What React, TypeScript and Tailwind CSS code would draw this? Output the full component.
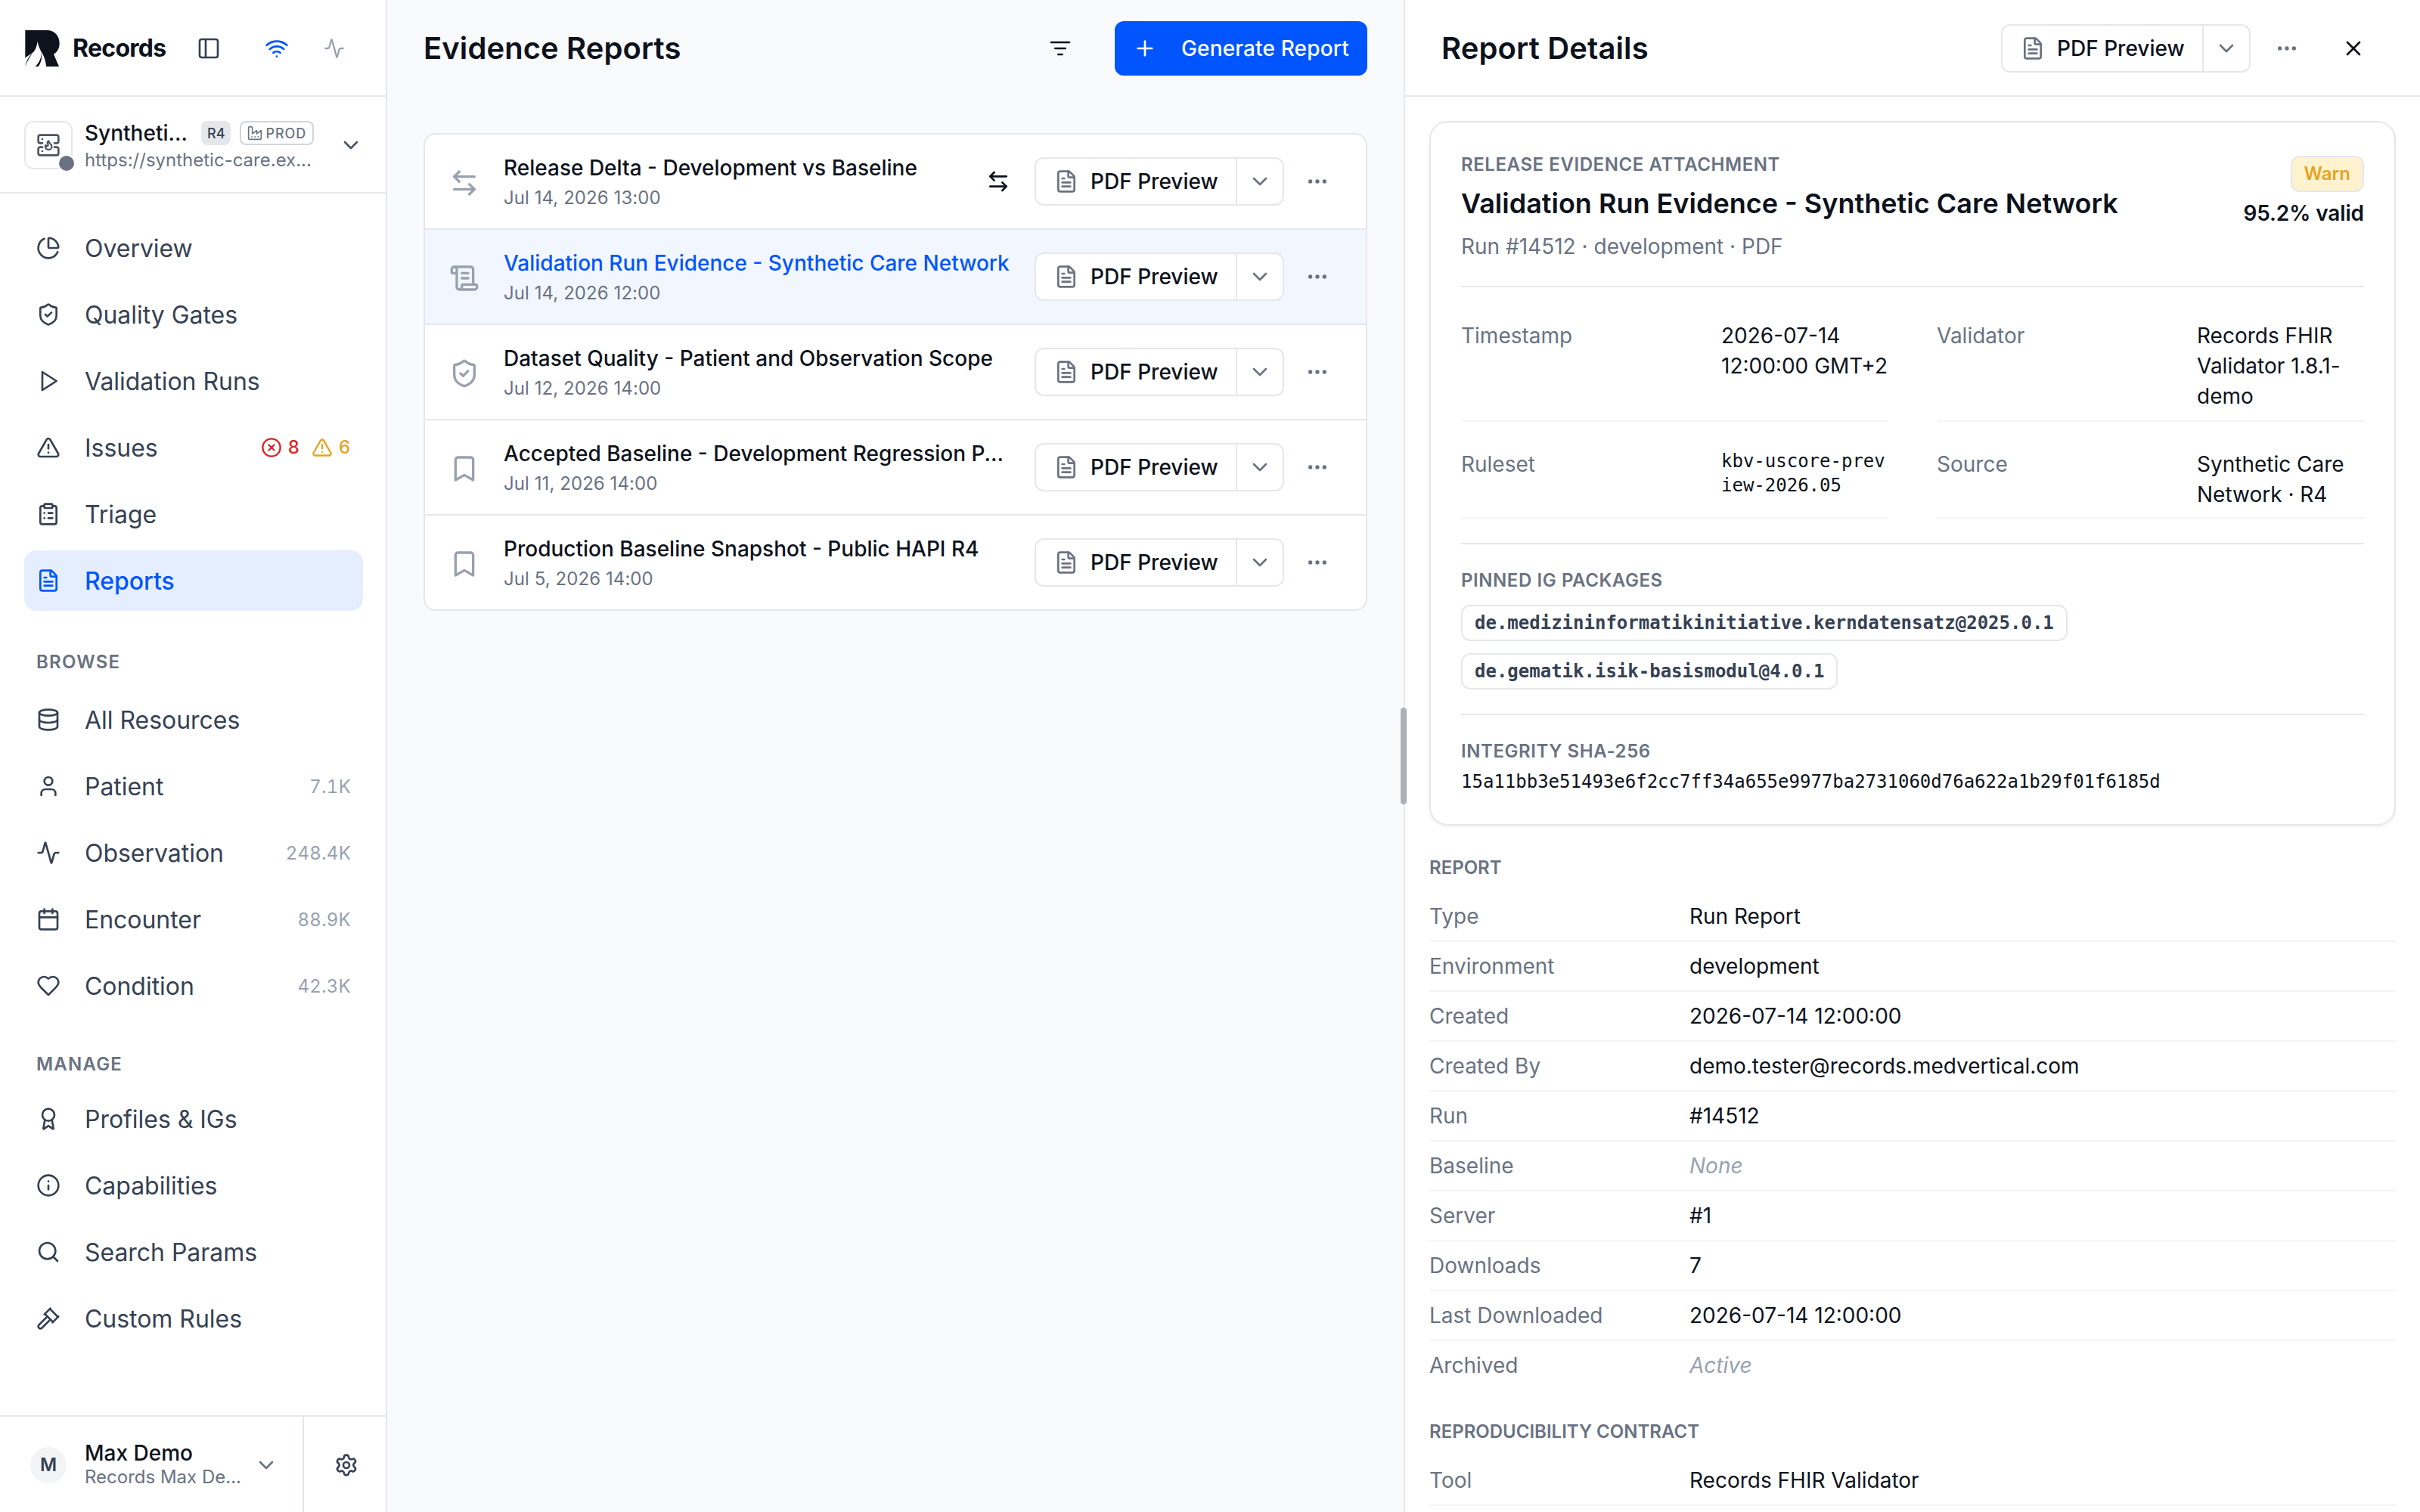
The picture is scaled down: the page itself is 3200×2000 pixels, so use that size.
import type { ComponentType, ReactNode } from 'react'
import {
    Activity,
    ArrowLeftRight,
    Award,
    Calendar,
    ChartPie,
    ChevronDown,
    CircleX,
    ClipboardList,
    Database,
    Ellipsis,
    FileText,
    Gavel,
    Info,
    PanelLeft,
    Plus,
    ScrollText,
    Search,
    Settings,
    ShieldCheck,
    TriangleAlert,
    User,
    Wifi,
    X,
} from 'lucide-react'

type IconType = ComponentType<{ className?: string }>

function Glyph({ className, children }: { className?: string; children: ReactNode }) {
    return (
        <svg
            viewBox="0 0 24 24"
            fill="none"
            stroke="currentColor"
            strokeWidth={2}
            strokeLinecap="round"
            strokeLinejoin="round"
            className={className}
        >
            {children}
        </svg>
    )
}

const PlayIcon: IconType = ({ className }) => (
    <Glyph className={className}>
        <polygon points="6 3 20 12 6 21 6 3" />
    </Glyph>
)

const HeartIcon: IconType = ({ className }) => (
    <Glyph className={className}>
        <path d="M19 14c1.49-1.46 3-3.21 3-5.5A5.5 5.5 0 0 0 16.5 3c-1.76 0-3 .5-4.5 2-1.5-1.5-2.74-2-4.5-2A5.5 5.5 0 0 0 2 8.5c0 2.3 1.5 4.05 3 5.5l7 7Z" />
    </Glyph>
)

const BookmarkIcon: IconType = ({ className }) => (
    <Glyph className={className}>
        <path d="m19 21-7-4-7 4V5a2 2 0 0 1 2-2h10a2 2 0 0 1 2 2v16z" />
    </Glyph>
)

const FilterIcon: IconType = ({ className }) => (
    <Glyph className={className}>
        <path d="M3 6h18" />
        <path d="M7 12h10" />
        <path d="M10 18h4" />
    </Glyph>
)

const FactoryIcon: IconType = ({ className }) => (
    <Glyph className={className}>
        <path d="M2 20a2 2 0 0 0 2 2h16a2 2 0 0 0 2-2V8l-7 5V8l-7 5V4a2 2 0 0 0-2-2H4a2 2 0 0 0-2 2Z" />
        <path d="M17 18h1" />
        <path d="M12 18h1" />
        <path d="M7 18h1" />
    </Glyph>
)

const FhirServerIcon: IconType = ({ className }) => (
    <Glyph className={className}>
        <path d="M6 10H4a2 2 0 0 1-2-2V4a2 2 0 0 1 2-2h16a2 2 0 0 1 2 2v4a2 2 0 0 1-2 2h-2" />
        <path d="M6 14H4a2 2 0 0 0-2 2v4a2 2 0 0 0 2 2h16a2 2 0 0 0 2-2v-4a2 2 0 0 0-2-2h-2" />
        <path d="M6 6h.01" />
        <path d="M6 18h.01" />
        <path
            transform="translate(6.6 6.35) scale(.46)"
            strokeWidth={3.6}
            d="M8.5 14.5A2.5 2.5 0 0 0 11 12c0-1.38-.5-2-1-3-1.072-2.143-.224-4.054 2-6 .5 2.5 2 4.9 4 6.5 2 1.6 3 3.5 3 5.5a7 7 0 1 1-14 0c0-1.153.433-2.294 1-3a2.5 2.5 0 0 0 2.5 2.5z"
        />
    </Glyph>
)

function Logo({ className }: { className?: string }) {
    return (
        <svg viewBox="0 0 136 144" className={className} fill="currentColor">
            <path d="M0 0H86C116 0 136 22 136 52C136 72 127 87 113 95L134 144H83C82 122 74 100 64 86C58 74 52 62 49 44C46 62 42 76 33 86C22 96 8 102 0 110Z" />
            <path d="M30 90C18 100 6 116 0 144C8 124 18 106 30 90Z" />
            <path d="M64 84C66 108 56 128 40 144H52C64 128 68 108 64 84Z" />
        </svg>
    )
}

type NavItem = { icon: IconType; label: string; count?: string; issues?: boolean; active?: boolean }

const mainNav: NavItem[] = [
    { icon: ChartPie, label: 'Overview' },
    { icon: ShieldCheck, label: 'Quality Gates' },
    { icon: PlayIcon, label: 'Validation Runs' },
    { icon: TriangleAlert, label: 'Issues', issues: true },
    { icon: ClipboardList, label: 'Triage' },
    { icon: FileText, label: 'Reports', active: true },
]

const browseNav: NavItem[] = [
    { icon: Database, label: 'All Resources' },
    { icon: User, label: 'Patient', count: '7.1K' },
    { icon: Activity, label: 'Observation', count: '248.4K' },
    { icon: Calendar, label: 'Encounter', count: '88.9K' },
    { icon: HeartIcon, label: 'Condition', count: '42.3K' },
]

const manageNav: NavItem[] = [
    { icon: Award, label: 'Profiles & IGs' },
    { icon: Info, label: 'Capabilities' },
    { icon: Search, label: 'Search Params' },
    { icon: Gavel, label: 'Custom Rules' },
]

function NavList({ items }: { items: NavItem[] }) {
    return (
        <ul className="flex flex-col gap-2">
            {items.map(({ icon: Icon, label, count, issues, active }) => (
                <li
                    key={label}
                    className={
                        active
                            ? 'flex h-20 items-center rounded-2xl bg-[#e5eeff] px-4 font-medium text-[#0055ff]'
                            : 'flex h-20 items-center rounded-2xl px-4 text-gray-700'
                    }
                >
                    <Icon className="size-8 shrink-0" />
                    <span className="ml-8 flex-1 pt-0.5 text-[32px] tracking-[-0.001em]">{label}</span>
                    {count && <span className="pt-0.5 text-2xl tracking-[0.01em] text-gray-400 tabular-nums">{count}</span>}
                    {issues && (
                        <span className="flex items-center gap-4 pr-px text-2xl font-medium">
                            <span className="flex items-center gap-2 text-[#dc2626]">
                                <CircleX className="size-7" />8
                            </span>
                            <span className="flex items-center gap-2 text-[#e5a320]">
                                <TriangleAlert className="size-7" />6
                            </span>
                        </span>
                    )}
                </li>
            ))}
        </ul>
    )
}

function Sidebar() {
    return (
        <aside className="flex w-[512px] shrink-0 flex-col border-r-2 border-gray-200 bg-white">
            {/* Brand */}
            <div className="flex h-32 items-center border-b-2 border-gray-200 pt-0.5 pl-[33px]">
                <Logo className="h-12 w-[46px] text-[#0d121c]" />
                <span className="ml-[17px] w-[164px] text-[32px] font-bold tracking-[-0.022em] text-[#0d121c]">Records</span>
                <PanelLeft className="size-8 text-gray-700" />
                <Wifi className="ml-[58px] size-8 text-[#0055ff]" />
                <Activity className="ml-[46px] size-7 text-gray-400" />
            </div>

            {/* Server picker */}
            <div className="flex h-32 items-center border-b-2 border-gray-200 pt-0.5 pr-[30px] pl-8">
                <div className="relative flex size-16 shrink-0 items-center justify-center rounded-xl border-2 border-gray-200">
                    <FhirServerIcon className="size-8 text-gray-600" />
                    <span className="absolute -right-1 -bottom-1 size-5 rounded-full bg-gray-500 ring-2 ring-white" />
                </div>
                <div className="mt-1 ml-4 w-[304px] whitespace-nowrap">
                    <div className="flex h-8 items-center">
                        <span className="w-[154px] text-[28px] font-medium text-[#0d121c]">Syntheti...</span>
                        <span className="flex h-8 items-center rounded-lg bg-gray-200 px-2 text-[18px] font-medium text-gray-700">R4</span>
                        <span className="ml-3 flex h-8 items-center gap-1 rounded-lg border-2 border-gray-300 px-2 text-[18px] font-medium tracking-[0.05em] text-gray-500">
                            <FactoryIcon className="size-5" />
                            PROD
                        </span>
                    </div>
                    <div className="mt-1 text-2xl leading-8 text-gray-500">https://synthetic-care.ex...</div>
                </div>
                <ChevronDown className="ml-auto size-8 text-gray-600" />
            </div>

            {/* Navigation */}
            <nav className="flex-1 pt-8 pr-[30px] pl-8">
                <NavList items={mainNav} />
                <h3 className="mt-[52px] mb-5 px-4 text-2xl font-semibold tracking-[0.05em] text-gray-500">BROWSE</h3>
                <NavList items={browseNav} />
                <h3 className="mt-12 mb-4 px-4 text-2xl font-semibold tracking-[0.05em] text-gray-500">MANAGE</h3>
                <NavList items={manageNav} />
            </nav>

            {/* Account */}
            <div className="flex h-32 border-t-2 border-gray-200">
                <div className="flex w-[402px] items-center border-r-2 border-gray-200 pt-0.5 pl-10">
                    <span className="flex size-12 items-center justify-center rounded-full bg-gray-100 text-2xl font-semibold text-gray-700">
                        M
                    </span>
                    <div className="ml-6 w-[224px]">
                        <div className="text-[28px] leading-8 font-medium text-[#0d121c]">Max Demo</div>
                        <div className="text-2xl leading-8 text-gray-500">Records Max De...</div>
                    </div>
                    <ChevronDown className="size-8 text-gray-500" />
                </div>
                <div className="flex flex-1 items-center justify-center pt-0.5 pl-1">
                    <Settings className="size-8 text-gray-700" />
                </div>
            </div>
        </aside>
    )
}

function PdfButton() {
    return (
        <div className="flex h-16 w-[330px] shrink-0 rounded-xl border-2 border-gray-200 bg-white">
            <button className="flex w-[266px] items-center gap-4 border-r-2 border-gray-200 pl-6 text-[28px] font-medium whitespace-nowrap text-[#0d121c]">
                <FileText className="size-8 text-gray-500" />
                PDF Preview
            </button>
            <button className="flex flex-1 items-center justify-center">
                <ChevronDown className="size-8 text-gray-500" />
            </button>
        </div>
    )
}

type Report = { icon: IconType; title: string; date: string; selected?: boolean; compare?: boolean }

const reports: Report[] = [
    { icon: ArrowLeftRight, title: 'Release Delta - Development vs Baseline', date: 'Jul 14, 2026 13:00', compare: true },
    { icon: ScrollText, title: 'Validation Run Evidence - Synthetic Care Network', date: 'Jul 14, 2026 12:00', selected: true },
    { icon: ShieldCheck, title: 'Dataset Quality - Patient and Observation Scope', date: 'Jul 12, 2026 14:00' },
    { icon: BookmarkIcon, title: 'Accepted Baseline - Development Regression P...', date: 'Jul 11, 2026 14:00' },
    { icon: BookmarkIcon, title: 'Production Baseline Snapshot - Public HAPI R4', date: 'Jul 5, 2026 14:00' },
]

function ReportList() {
    return (
        <main className="w-[1344px] shrink-0 bg-[#f9fafc] px-12">
            <header className="flex h-32 items-center">
                <h1 className="flex-1 text-[40px] font-semibold tracking-[0.002em] text-[#0d121c]">Evidence Reports</h1>
                <FilterIcon className="mr-14 size-8 text-[#0d121c]" />
                <button className="flex h-[72px] w-[334px] items-center gap-8 rounded-xl bg-[#0055ff] pl-6 text-[28px] font-medium tracking-[0.005em] whitespace-nowrap text-white">
                    <Plus className="size-8" />
                    Generate Report
                </button>
            </header>

            <ul className="mt-12 divide-y-2 divide-gray-200 overflow-hidden rounded-2xl border-2 border-gray-200 bg-white">
                {reports.map(({ icon: Icon, title, date, selected, compare }) => (
                    <li
                        key={title}
                        className={
                            selected
                                ? 'box-content flex h-[124px] items-center bg-[#f2f7ff] pl-8'
                                : 'box-content flex h-[124px] items-center pl-8'
                        }
                    >
                        <Icon className="mt-1 size-10 shrink-0 text-gray-400" />
                        <div className="ml-8 flex w-[670px] shrink-0 items-center">
                            <div className="flex-1 whitespace-nowrap">
                                <div className={selected ? 'text-[28px] leading-10 font-medium text-[#0055ff]' : 'text-[28px] leading-10 font-medium text-[#0d121c]'}>
                                    {title}
                                </div>
                                <div className="mt-1 text-2xl tracking-[0.003em] text-gray-500">{date}</div>
                            </div>
                            {compare && <ArrowLeftRight className="size-8 text-[#0d121c]" />}
                        </div>
                        <div className="ml-8">
                            <PdfButton />
                        </div>
                        <Ellipsis className="ml-7 size-8 text-gray-500" />
                    </li>
                ))}
            </ul>
        </main>
    )
}

function CardLabel({ children }: { children: ReactNode }) {
    return <h3 className="text-2xl font-semibold tracking-[0.024em] text-gray-500">{children}</h3>
}

function SectionLabel({ children }: { children: ReactNode }) {
    return <h3 className="text-2xl font-semibold text-gray-500">{children}</h3>
}

function Field({ label, children }: { label: string; children: ReactNode }) {
    return (
        <div className="flex gap-6 border-b-2 border-gray-100 py-3 text-[28px] leading-10">
            <dt className="w-80 shrink-0 text-gray-500">{label}</dt>
            <dd className="min-w-0 flex-1 text-[#0d121c]">{children}</dd>
        </div>
    )
}

function EvidenceCard() {
    return (
        <section className="h-[932px] rounded-3xl border-2 border-gray-200 px-10 shadow-[0_2px_4px_rgba(0,0,0,0.05)]">
            <div className="flex h-[218px] justify-between border-b-2 border-gray-200">
                <div className="pt-10">
                    <CardLabel>RELEASE EVIDENCE ATTACHMENT</CardLabel>
                    <h2 className="mt-[11px] text-[36px] leading-[48px] font-semibold text-[#0d121c]">
                        Validation Run Evidence - Synthetic Care Network
                    </h2>
                    <p className="mt-[13px] text-[28px] leading-10 text-gray-500">Run #14512 · development · PDF</p>
                </div>
                <div className="flex flex-col items-end pt-11">
                    <span className="flex h-12 items-center rounded-xl border-2 border-gray-200 bg-[#fff3cf] px-4 text-2xl font-semibold text-[#e5a320]">
                        Warn
                    </span>
                    <span className="mt-2 text-[28px] leading-10 font-semibold tracking-[-0.004em] text-[#0d121c]">95.2% valid</span>
                </div>
            </div>

            <dl className="grid h-[338px] grid-cols-2 grid-rows-[146px_104px] content-start gap-x-16 gap-y-6 pt-8">
                <Field label="Timestamp">2026-07-14 12:00:00 GMT+2</Field>
                <Field label="Validator">Records FHIR Validator 1.8.1-demo</Field>
                <Field label="Ruleset">
                    <span className="block font-['DejaVu_Sans_Mono',monospace] text-2xl leading-8 break-all">kbv-uscore-preview-2026.05</span>
                </Field>
                <Field label="Source">Synthetic Care Network · R4</Field>
            </dl>

            <div className="h-[226px] border-t-2 border-gray-200 pt-8">
                <CardLabel>PINNED IG PACKAGES</CardLabel>
                <div className="mt-4 flex flex-col items-start gap-4 font-['DejaVu_Sans_Mono',monospace] text-2xl font-bold text-gray-700">
                    <span className="flex h-12 items-center rounded-xl border-2 border-gray-200 px-4">
                        de.medizininformatikinitiative.kerndatensatz@2025.0.1
                    </span>
                    <span className="flex h-12 items-center rounded-xl border-2 border-gray-200 px-4">de.gematik.isik-basismodul@4.0.1</span>
                </div>
            </div>

            <div className="border-t-2 border-gray-200 pt-8">
                <CardLabel>INTEGRITY SHA-256</CardLabel>
                <p className="mt-2 font-['DejaVu_Sans_Mono',monospace] text-2xl text-[#0d121c]">
                    15a11bb3e51493e6f2cc7ff34a655e9977ba2731060d76a622a1b29f01f6185d
                </p>
            </div>
        </section>
    )
}

const reportFields = [
    { label: 'Type', value: 'Run Report' },
    { label: 'Environment', value: 'development' },
    { label: 'Created', value: '2026-07-14 12:00:00' },
    { label: 'Created By', value: 'demo.tester@records.medvertical.com' },
    { label: 'Run', value: '#14512' },
    { label: 'Baseline', value: 'None', muted: true },
    { label: 'Server', value: '#1' },
    { label: 'Downloads', value: '7' },
    { label: 'Last Downloaded', value: '2026-07-14 12:00:00' },
]

function DetailsPanel() {
    return (
        <section className="relative flex-1 border-l-2 border-gray-200 bg-white">
            {/* Resize handle */}
            <span className="absolute top-[936px] -left-1.5 h-32 w-2 rounded-full bg-[#adb0b8]" />

            <header className="flex h-32 items-center border-b-2 border-gray-200 pt-0.5 pr-[72px] pl-12">
                <h2 className="flex-1 text-[40px] font-semibold tracking-[0.003em] text-[#0d121c]">Report Details</h2>
                <PdfButton />
                <Ellipsis className="ml-8 size-8 text-gray-500" />
                <X className="ml-14 size-8 text-[#0d121c]" />
            </header>

            <div className="h-[1872px] overflow-hidden p-8">
                <EvidenceCard />

                <div className="mt-10">
                    <SectionLabel>REPORT</SectionLabel>
                </div>
                <dl className="mt-4">
                    {reportFields.map(({ label, value, muted }) => (
                        <Field key={label} label={label}>
                            {muted ? <em className="text-gray-400">{value}</em> : value}
                        </Field>
                    ))}
                    <div className="flex gap-6 py-3 text-[28px] leading-10">
                        <dt className="w-80 shrink-0 text-gray-500">Archived</dt>
                        <dd className="text-gray-400 italic">Active</dd>
                    </div>
                </dl>

                <div className="mt-10">
                    <SectionLabel>REPRODUCIBILITY CONTRACT</SectionLabel>
                </div>
                <dl className="mt-4">
                    <Field label="Tool">Records FHIR Validator</Field>
                </dl>
            </div>
        </section>
    )
}

export default function App() {
    return (
        <div className="flex h-[2000px] w-[3200px] overflow-hidden bg-white font-['Inter',sans-serif] antialiased">
            <Sidebar />
            <ReportList />
            <DetailsPanel />
        </div>
    )
}
